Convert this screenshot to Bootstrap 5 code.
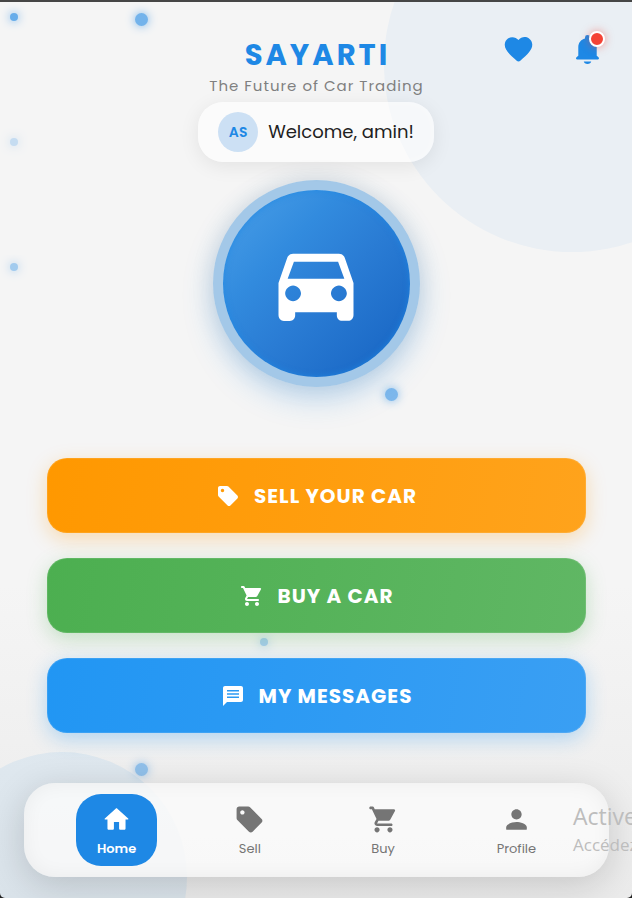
<!DOCTYPE html>
<html lang="en">
<head>
<meta charset="utf-8">
<meta name="viewport" content="width=device-width, initial-scale=1">
<title>Sayarti</title>
<link href="https://cdn.jsdelivr.net/npm/bootstrap@5.3.0/dist/css/bootstrap.min.css" rel="stylesheet">
<style>
html{background:#222}
body{font-family:Poppins,Inter,"Liberation Sans",sans-serif;background:#222;color:#212121;--brand:#1e88e5}
svg{fill:currentColor;display:block}
.app{min-height:100vh;border-top:2px solid #464646;border-radius:0 0 5px 5px;background:linear-gradient(#f5f5f5 0,#f5f5f5 65%,#ebebeb 100%);isolation:isolate}
.blob{position:absolute;border-radius:50%;background:var(--brand);z-index:-1}
.blob-top{width:376px;height:376px;top:-126px;right:-128px;opacity:.05}
.blob-bottom{width:250px;height:250px;bottom:-104px;left:-63px;opacity:.08}
.dot{position:absolute;width:8px;height:8px;border-radius:50%;background:var(--brand);box-shadow:0 0 10px var(--brand);z-index:-1}
.dot-lg{width:13px;height:13px}
.top-row{display:grid;grid-template-columns:1fr auto 1fr;padding:23px 21px 0}
.brand-name{font-size:29px;line-height:60px;height:49px;font-weight:700;letter-spacing:3px;text-indent:3px;color:var(--brand)}
.tagline{font-size:15px;line-height:24px;letter-spacing:1px;text-indent:1px;color:#808080}
.top-actions{gap:21px}
.top-actions button{width:48px;height:48px;color:var(--brand)}
.alert-dot{position:absolute;top:6px;right:6px;width:16px;height:16px;border-radius:50%;background:#f44336;border:2px solid #fff;box-shadow:0 0 8px rgba(244,67,54,.5)}
.welcome{margin-top:4px;padding:10px 20px;gap:10px;border-radius:25px;font-size:18px;line-height:26px;background:rgba(255,255,255,.55);box-shadow:0 4px 20px rgba(0,0,0,.08),inset 0 0 12px rgba(255,255,255,.4)}
.initials{width:40px;height:40px;font-size:14px;font-weight:600;color:var(--brand);background:#cce0f4}
.hero{width:207px;height:207px;margin-top:18px;border:10px solid rgba(30,125,210,.38);background:linear-gradient(135deg,#4ba0e8,#328bde 32%,#2a7cd4 55%,#1b69c6 88%) padding-box;box-shadow:0 12px 30px rgba(30,136,229,.26),0 0 24px rgba(0,0,0,.1),inset 0 0 6px rgba(30,136,229,.8);color:#fff}
.actions{margin:71px 46px 0 47px;gap:25px}
.action{height:75px;border-radius:20px;gap:14px;font-size:20px;line-height:30px;font-weight:700;letter-spacing:1px;color:#fff;border:1px solid rgba(255,255,255,.1)}
.action:hover{color:#fff}
.sell{background:linear-gradient(100deg,#ff9800,#ffa31c) border-box;box-shadow:0 6px 20px rgba(255,152,0,.28)}
.buy{background:linear-gradient(100deg,#4caf50,#60b764) border-box;box-shadow:0 6px 20px rgba(76,175,80,.28)}
.messages{background:linear-gradient(100deg,#2196f3,#3a9ff3) border-box;box-shadow:0 6px 20px rgba(33,150,243,.3)}
.bottom-nav{margin:auto 23px 21px 24px;height:94px;padding:0 26px;border-radius:31px;background:rgba(250,250,250,.85);box-shadow:0 8px 36px rgba(0,0,0,.16),inset 0 0 20px rgba(0,0,0,.05)}
.tab{width:81px;height:72px;border-radius:25px;color:#757575;font-size:13px;line-height:20px;text-decoration:none;padding-top:2px;gap:4px}
.tab.active{background:var(--brand);color:#fff;font-weight:600}
.notice{position:absolute;left:573px;top:798px;color:#bdbdbd;font-family:"Open Sans","Noto Sans",sans-serif;white-space:nowrap;pointer-events:none}
.notice-title{font-size:23px;line-height:32px}
.notice-text{font-size:17px;line-height:26px}
</style>
<script src="https://cdn.jsdelivr.net/npm/bootstrap@5.3.0/dist/js/bootstrap.bundle.min.js"></script>
</head>
<body>
<svg width="0" height="0" class="position-absolute" aria-hidden="true">
<symbol id="i-tag" viewBox="0 0 24 24"><path d="M21.41 11.58l-9-9C12.05 2.22 11.55 2 11 2H4c-1.1 0-2 .9-2 2v7c0 .55.22 1.05.59 1.42l9 9c.36.36.86.58 1.41.58s1.05-.22 1.41-.59l7-7c.37-.36.59-.86.59-1.41s-.23-1.06-.59-1.42zM6.5 8.200C5.600 8.200 4.800 7.400 4.800 6.500S5.600 4.800 6.500 4.800 8.200 5.600 8.200 6.500 7.400 8.200 6.500 8.200z"/></symbol>
<symbol id="i-cart" viewBox="0 0 24 24"><path d="M7 18c-1.1 0-1.990.9-1.990 2S5.900 22 7 22s2-.9 2-2-.9-2-2-2zM1 3c0 .55.450 1 1 1h1l3.600 7.590-1.350 2.440C4.520 15.370 5.480 17 7 17h11c.55 0 1-.45 1-1s-.45-1-1-1H7l1.100-2h7.450c.75 0 1.410-.41 1.750-1.030l3.580-6.490A.996.996 0 0020.010 4H5.210l-.67-1.430A.993.993 0 003.640 2H2c-.55 0-1 .45-1 1zm16 15c-1.100 0-1.990.9-1.990 2s.89 2 1.990 2 2-.9 2-2-.9-2-2-2z"/></symbol>
</svg>
<div class="app position-relative overflow-hidden d-flex flex-column">
  <div class="blob blob-top"></div>
  <div class="blob blob-bottom"></div>
  <span class="dot" style="left:10px;top:11px;opacity:.65"></span>
  <span class="dot" style="left:10px;top:136px;opacity:.22"></span>
  <span class="dot" style="left:10px;top:261px;opacity:.38"></span>
  <span class="dot dot-lg" style="left:135px;top:11px;opacity:.6"></span>
  <span class="dot dot-lg" style="left:385px;top:386px;opacity:.55"></span>
  <span class="dot dot-lg" style="left:135px;top:761px;opacity:.45"></span>
  <span class="dot" style="left:260px;top:636px;opacity:.35"></span>

  <header class="d-flex flex-column align-items-center">
    <div class="top-row w-100">
      <div></div>
      <div class="text-center">
        <h1 class="brand-name m-0">SAYARTI</h1>
        <p class="tagline m-0">The Future of Car Trading</p>
      </div>
      <div class="top-actions d-flex justify-content-end">
        <button type="button" class="btn border-0 p-0 d-flex align-items-center justify-content-center" aria-label="Favorites">
          <svg width="33" height="33" viewBox="0 0 24 24"><path d="M13.350 20.130c-.76.69-1.930.69-2.690-.01l-.11-.1C5.300 15.270 1.870 12.160 2 8.280c.06-1.700.93-3.330 2.340-4.290 2.640-1.800 5.900-.96 7.660 1.100 1.760-2.060 5.020-2.910 7.660-1.100 1.410.96 2.280 2.590 2.340 4.290.14 3.880-3.300 6.990-8.550 11.760l-.1.090z"/></svg>
        </button>
        <button type="button" class="btn border-0 p-0 position-relative d-flex align-items-center justify-content-center" aria-label="Notifications">
          <svg width="33" height="33" viewBox="0 0 24 24"><path d="M12 22.500c1.500 0 2.500-.7 2.700-1.800H9.300c.2 1.100 1.200 1.800 2.700 1.800zM20 17.700l-1.300-1.200V10.300c0-3.100-1.800-5.500-4.900-6.300v-.8a1.800 1.800 0 00-3.600 0V4C7.100 4.800 5.300 7.200 5.300 10.300v6.200L4 17.700c-.7.700-.3 1.500.5 1.500h15c.8 0 1.200-.8.5-1.500z"/></svg>
          <span class="alert-dot"></span>
        </button>
      </div>
    </div>
    <div class="welcome d-flex align-items-center">
      <span class="initials rounded-circle d-flex align-items-center justify-content-center">AS</span>
      <span>Welcome, amin!</span>
    </div>
  </header>

  <main class="d-flex flex-column">
    <div class="hero rounded-circle align-self-center d-flex align-items-center justify-content-center">
      <svg width="100" height="100" viewBox="0 -0.750 24 24"><path d="M18.920 5.010C18.720 4.420 18.160 4 17.500 4h-11c-.66 0-1.210.42-1.420 1.010L3 11v7.700c0 .8.500 1.400 1.300 1.400h1.400c.8 0 1.300-.6 1.300-1.300V18h10v.8c0 .7.500 1.300 1.300 1.300h1.400c.8 0 1.300-.6 1.300-1.400V11l-2.080-5.990zM6.500 15.400c-1 0-1.900-.9-1.900-1.900s.9-1.900 1.900-1.900 1.900.9 1.900 1.900-.9 1.900-1.900 1.900zm11 0c-1 0-1.900-.9-1.900-1.900s.9-1.900 1.900-1.900 1.900.9 1.900 1.900-.9 1.900-1.900 1.900zM5.200 10l1.500-4.100h10.600L18.800 10z"/></svg>
    </div>
    <div class="actions d-flex flex-column">
      <button type="button" class="btn action sell d-flex align-items-center justify-content-center"><svg width="24" height="24"><use href="#i-tag"/></svg>SELL YOUR CAR</button>
      <button type="button" class="btn action buy d-flex align-items-center justify-content-center"><svg width="24" height="24"><use href="#i-cart"/></svg>BUY A CAR</button>
      <button type="button" class="btn action messages d-flex align-items-center justify-content-center"><svg width="24" height="24" viewBox="0 0 24 24"><path d="M20 2H4c-1.100 0-1.990.9-1.990 2L2 22l4-4h14c1.100 0 2-.9 2-2V4c0-1.100-.9-2-2-2zM6 6h12v1.500H6V6zm12 8H6v-1.500h12V14zm0-3.250H6v-1.500h12v1.500z"/></svg>MY MESSAGES</button>
    </div>
  </main>

  <nav class="bottom-nav d-flex align-items-center justify-content-around" aria-label="Main">
    <a href="#" class="tab active d-flex flex-column align-items-center justify-content-center" aria-current="page"><svg width="31" height="31" viewBox="0 0 24 24"><path d="M10 19v-5h4v5c0 .55.450 1 1 1h3c.55 0 1-.45 1-1v-7h1.700c.46 0 .68-.57.330-.87L12.670 3.600c-.38-.34-.96-.34-1.340 0l-8.360 7.530c-.34.3-.13.87.330.87H5v7c0 .55.450 1 1 1h3c.55 0 1-.45 1-1z"/></svg>Home</a>
    <a href="#" class="tab d-flex flex-column align-items-center justify-content-center"><svg width="31" height="31"><use href="#i-tag"/></svg>Sell</a>
    <a href="#" class="tab d-flex flex-column align-items-center justify-content-center"><svg width="31" height="31"><use href="#i-cart"/></svg>Buy</a>
    <a href="#" class="tab d-flex flex-column align-items-center justify-content-center"><svg width="31" height="31" viewBox="0 0 24 24"><path d="M12 12c2.210 0 4-1.790 4-4s-1.790-4-4-4-4 1.790-4 4 1.790 4 4 4zm0 2c-2.670 0-8 1.340-8 4v1c0 .55.050 1 .5 1h15c.450 0 .5-.45.500-1v-1c0-2.660-5.330-4-8-4z"/></svg>Profile</a>
  </nav>
  <div class="notice"><div class="notice-title">Active</div><div class="notice-text">Accédez</div></div>
</div>
</body>
</html>
